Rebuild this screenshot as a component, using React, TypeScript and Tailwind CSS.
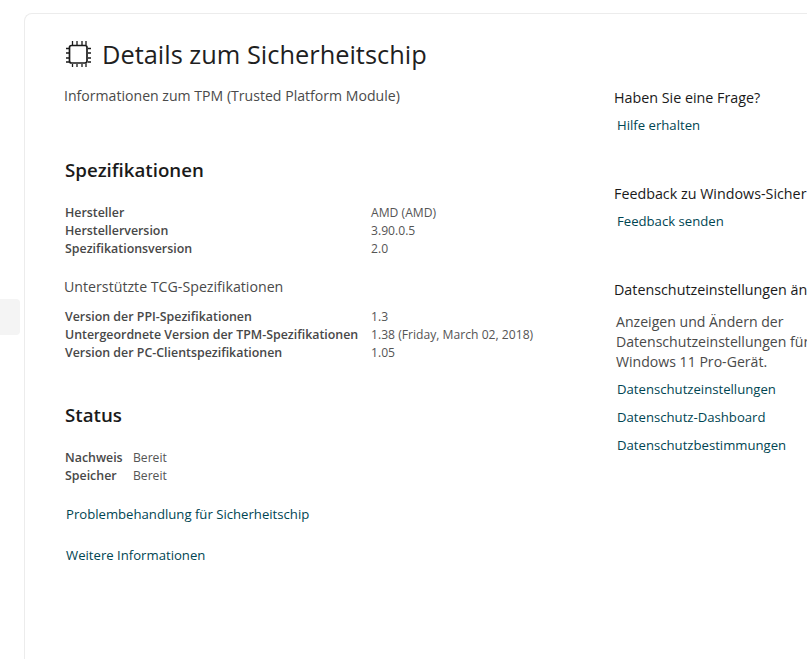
import { ReactNode } from 'react'

const font = { fontFamily: '"Open Sans", "Noto Sans", sans-serif' }

function ChipIcon() {
    return (
        <svg width="26" height="26" viewBox="0 0 26 26" fill="none" stroke="#1a1a1a" className="shrink-0">
            <rect x="4.5" y="4.5" width="17.5" height="17.5" rx="2" strokeWidth="1.7" />
            <path
                d="M7.5 0v4M12 0v4M17 0v4M21 0v4M7.5 23v3M12 23v3M17 23v3M21 23v3M1 7.5h3M1 12h3M1 17h3M1 21h3M23 7.5h3M23 12h3M23 17h3M23 21h3"
                strokeWidth="1.3"
            />
        </svg>
    )
}

function Link({ children, className = '' }: { children: ReactNode; className?: string }) {
    return <a className={`block text-[13.15px] leading-[18px] text-[#004552] whitespace-nowrap ${className}`}>{children}</a>
}

function Row({ label, value }: { label: string; value: string }) {
    return (
        <div className="flex h-[18px] items-center leading-[18px] whitespace-nowrap">
            <span className="w-[306px] text-[12.4px] font-semibold text-[#484848]">{label}</span>
            <span className="text-[12.15px] text-[#555555]">{value}</span>
        </div>
    )
}

function SideHeading({ children }: { children: ReactNode }) {
    return <h3 className="text-[14.3px] leading-[20px] text-[#1a1a1a] whitespace-nowrap">{children}</h3>
}

export default function App() {
    return (
        <div className="flex h-[659px] w-[807px] overflow-hidden bg-white" style={font}>
            {/* sidebar, only the selected item's edge is visible */}
            <aside className="w-[24px] shrink-0 pt-[299px]">
                <div className="h-[36px] w-[20px] rounded-r bg-[#f4f4f4]" />
            </aside>

            <main className="mt-[13px] flex flex-1 rounded-tl-lg border-t border-l border-[#ececec]">
                <div className="w-[589px] shrink-0 pl-[40px]">
                    <div className="mt-[24px] flex items-center gap-[11px]">
                        <ChipIcon />
                        <h1 className="text-[25.4px] leading-[32px] text-[#1f1f1f] whitespace-nowrap">Details zum Sicherheitschip</h1>
                    </div>
                    <p className="mt-[16px] -ml-px text-[14.1px] leading-[20px] text-[#4a4a4a] whitespace-nowrap">
                        Informationen zum TPM (Trusted Platform Module)
                    </p>

                    <h2 className="mt-[51px] text-[18.7px] leading-[26px] font-semibold text-[#1a1a1a]">Spezifikationen</h2>
                    <div className="mt-[21px]">
                        <Row label="Hersteller" value="AMD (AMD)" />
                        <Row label="Herstellerversion" value="3.90.0.5" />
                        <Row label="Spezifikationsversion" value="2.0" />
                    </div>
                    <h3 className="mt-[19px] -ml-px text-[14.2px] leading-[20px] text-[#4a4a4a]">Unterstützte TCG-Spezifikationen</h3>
                    <div className="mt-[11px]">
                        <Row label="Version der PPI-Spezifikationen" value="1.3" />
                        <Row label="Untergeordnete Version der TPM-Spezifikationen" value="1.38 (Friday, March 02, 2018)" />
                        <Row label="Version der PC-Clientspezifikationen" value="1.05" />
                    </div>

                    <h2 className="mt-[40px] text-[18.7px] leading-[26px] font-semibold text-[#1a1a1a]">Status</h2>
                    <div className="mt-[21px] leading-[18px]">
                        <div className="flex">
                            <span className="w-[68px] text-[12.4px] font-semibold text-[#484848]">Nachweis</span>
                            <span className="text-[12.15px] text-[#555555]">Bereit</span>
                        </div>
                        <div className="flex">
                            <span className="w-[68px] text-[12.4px] font-semibold text-[#484848]">Speicher</span>
                            <span className="text-[12.15px] text-[#555555]">Bereit</span>
                        </div>
                    </div>
                    <Link className="mt-[20px] ml-[1px]">Problembehandlung für Sicherheitschip</Link>
                    <Link className="mt-[23px] ml-[1px]">Weitere Informationen</Link>
                </div>

                <div className="w-[300px] shrink-0 pt-[74px]">
                    <SideHeading>Haben Sie eine Frage?</SideHeading>
                    <Link className="mt-[8px] ml-[3px]">Hilfe erhalten</Link>

                    <div className="mt-[50px]">
                        <SideHeading>Feedback zu Windows-Sicherheit</SideHeading>
                        <Link className="mt-[8px] ml-[3px]">Feedback senden</Link>
                    </div>

                    <div className="mt-[50px]">
                        <SideHeading>Datenschutzeinstellungen ändern</SideHeading>
                        <p className="mt-[12px] ml-[2px] text-[14.1px] leading-[20px] text-[#4a4a4a] whitespace-nowrap">
                            Anzeigen und Ändern der
                            <br />
                            Datenschutzeinstellungen für Ihr
                            <br />
                            Windows 11 Pro-Gerät.
                        </p>
                        <Link className="mt-[8px] ml-[3px]">Datenschutzeinstellungen</Link>
                        <Link className="mt-[10px] ml-[3px]">Datenschutz-Dashboard</Link>
                        <Link className="mt-[10px] ml-[3px]">Datenschutzbestimmungen</Link>
                    </div>
                </div>
            </main>
        </div>
    )
}
